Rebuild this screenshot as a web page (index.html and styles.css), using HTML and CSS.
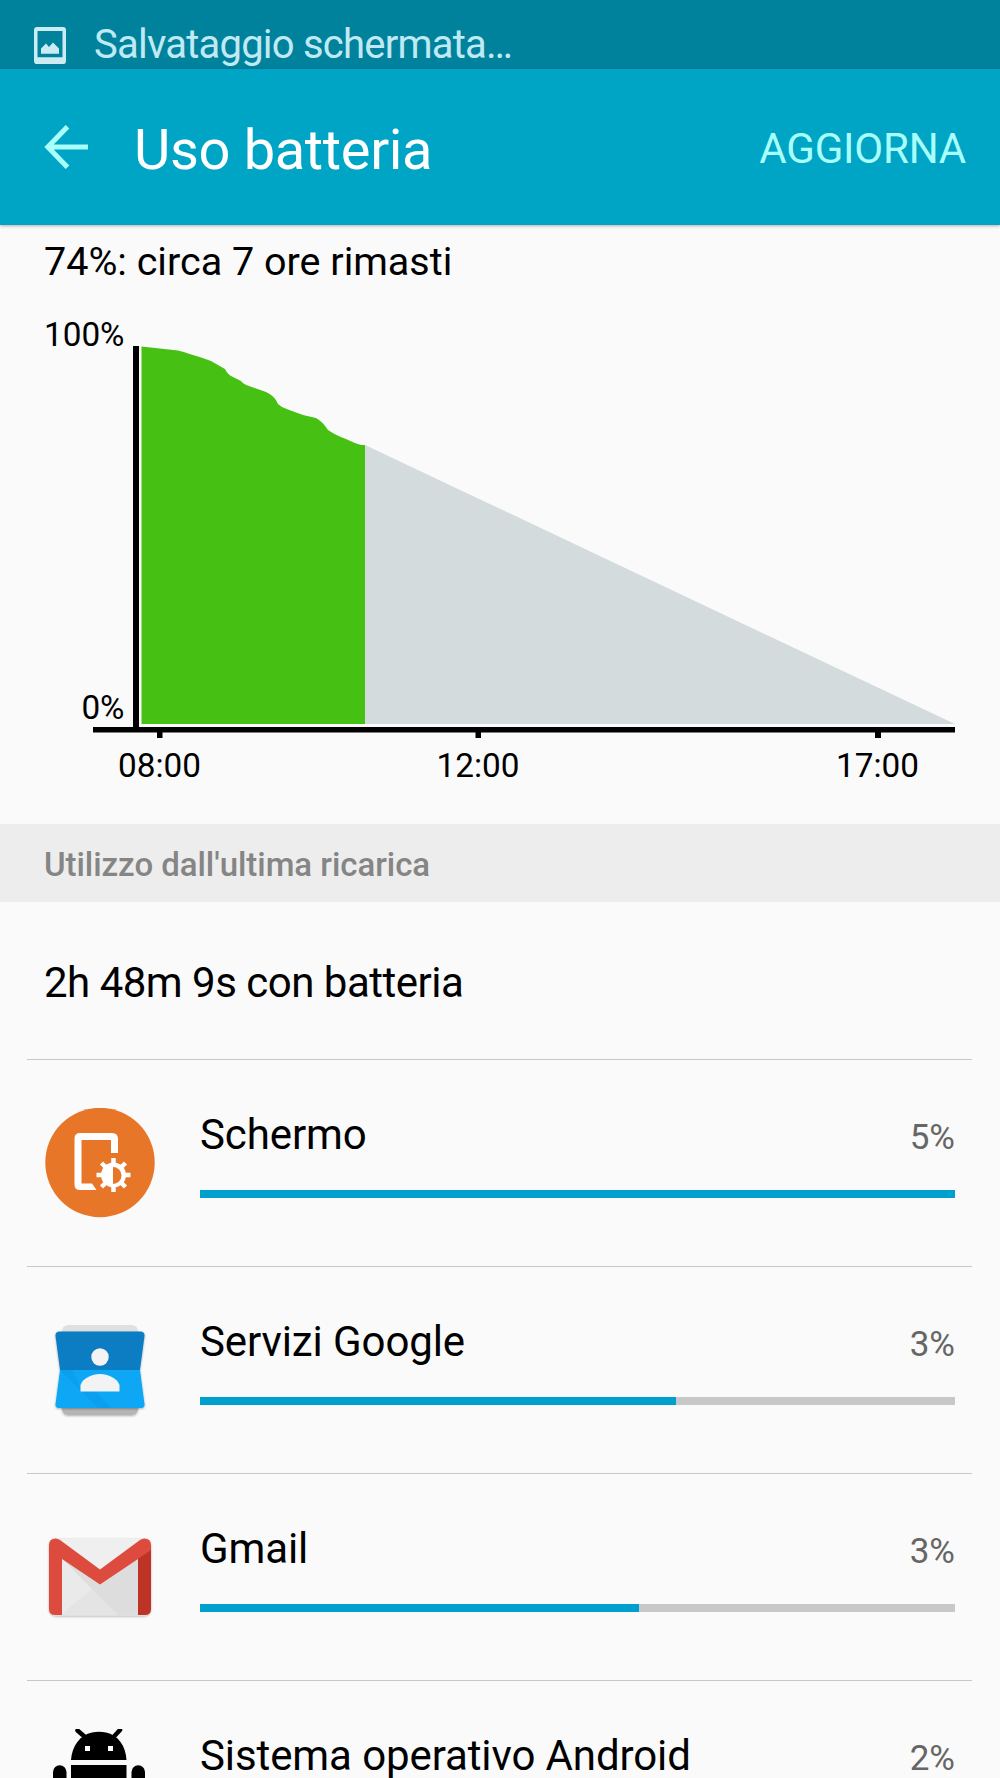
FILE: index.html
```html
<!DOCTYPE html>
<html lang="it">
<head>
<meta charset="utf-8">
<title>Uso batteria</title>
<link rel="stylesheet" href="styles.css">
</head>
<body>
<div class="status-bar">
  <svg class="status-icon" width="32" height="37" viewBox="0 0 32 36" preserveAspectRatio="none">
    <path fill="#ccecf4" fill-rule="evenodd" d="M3 0H29Q32 0 32 3V33Q32 36 29 36H3Q0 36 0 33V3Q0 0 3 0ZM3.500 4V29.500H28.500V4Z"/>
    <path fill="#ccecf4" d="M7 26V21L12 16L15 19.500L19 15L25 21V26Z"/>
  </svg>
  <span class="status-text">Salvataggio schermata…</span>
</div>
<header class="app-bar">
  <svg class="back" width="44" height="44" viewBox="0 0 44 44" fill="none" stroke="#a8fffb" stroke-width="5">
    <path d="M23.500 1.700L3.800 22L23.500 42.300M4 22H44"/>
  </svg>
  <h1 class="title">Uso batteria</h1>
  <span class="action">AGGIORNA</span>
</header>
<main>
  <p class="remaining">74%: circa 7 ore rimasti</p>
  <svg class="chart" width="1000" height="524" viewBox="0 300 1000 524">
    <path fill="#d3dbdd" d="M365 445L955 724H365Z"/>
    <path fill="#46c012" d="M141.500 346.500L178 350.500Q188 353 211 361L225 369Q227 374 233 377L241 381Q243 384 249 386L266 392Q275 396 278 404Q282 408 288 409.500L296 412.500Q302 415 316 418Q322 421 328 430Q335 435 346 439Q354 443 361 445H365V724H141.500Z"/>
    <path fill="#000" d="M133 346H139V727H955V732.500H881V738H875V732.500H481V738H475.500V732.500H162.500V738H157V732.500H93V727H133Z"/>
    <g class="axis-label">
      <text x="124.500" y="345.500" text-anchor="end">100%</text>
      <text x="124.500" y="718.500" text-anchor="end">0%</text>
      <text x="159.500" y="776.500" text-anchor="middle">08:00</text>
      <text x="478" y="776.500" text-anchor="middle">12:00</text>
      <text x="877.500" y="776.500" text-anchor="middle">17:00</text>
    </g>
  </svg>
  <h2 class="section">Utilizzo dall'ultima ricarica</h2>
  <p class="elapsed">2h 48m 9s con batteria</p>
  <ul class="usage">
    <li class="row">
      <svg class="icon" width="110" height="110" viewBox="0 0 110 110">
        <circle cx="55" cy="54.500" r="54.700" fill="#e87629"/>
        <path fill="#fff" d="M35 25H67Q73 25 73 31V45H66V32H36.500V75.500H47L51.500 82H35Q29.500 82 29.500 76.500V30.500Q29.500 25 35 25Z"/>
        <g stroke="#fff" stroke-width="4.500">
          <path d="M68.500 50V84M51.500 67H85.500M56.500 55L80.500 79M80.500 55L56.500 79"/>
        </g>
        <circle cx="68.500" cy="67" r="12.500" fill="#fff"/>
        <path fill="#e87629" d="M68 59A8.500 8.500 0 0 1 68 76Z"/>
      </svg>
      <div class="detail">
        <div class="line"><span class="name">Schermo</span><span class="percent">5%</span></div>
        <div class="track"><div class="fill" style="width:100%"></div></div>
      </div>
    </li>
    <li class="row">
      <svg class="icon" width="110" height="110" viewBox="0 0 110 110">
        <defs>
          <filter id="soft" x="-10%" y="-10%" width="120%" height="125%"><feDropShadow dx="0" dy="1" stdDeviation="1" flood-opacity=".3"/></filter>
        </defs>
        <rect x="17" y="10" width="76" height="25" rx="6" fill="#e0e0e0"/>
        <rect x="17" y="77" width="76" height="23" rx="6" fill="#b5b5b5" filter="url(#soft)"/>
        <g filter="url(#soft)">
          <path fill="#0a7dc3" d="M14 16.500H96Q100 17 99.500 21L95 55H15L10.500 21Q10 17 14 16.500Z"/>
          <path fill="#09a7f5" d="M15 55H95L99.500 89Q100 93 96 93H14Q10 93 10.500 89Z"/>
        </g>
        <path fill="#079ae8" d="M15 55H28L36 76H50L66 93H53Z" opacity=".5"/>
        <circle cx="55" cy="42" r="8.700" fill="#f3f3f3"/>
        <path fill="#f3f3f3" d="M35.500 76.500V70C38 63 47 59 55 59S72 63 74.500 70V76.500Z"/>
      </svg>
      <div class="detail">
        <div class="line"><span class="name">Servizi Google</span><span class="percent">3%</span></div>
        <div class="track"><div class="fill" style="width:63%"></div></div>
      </div>
    </li>
    <li class="row">
      <svg class="icon" width="110" height="110" viewBox="0 0 110 110">
        <rect x="4" y="16.500" width="102" height="77" rx="7" fill="#e4e4e4" filter="url(#soft)"/>
        <path fill="#efefef" d="M10 16.500H100L55 49Z"/>
        <path fill="#eaeaea" d="M17 36L47 67L17 92Z"/>
        <path fill="#d8d8d8" d="M17 36L47 67L73 93H93V32L56 61Z" opacity=".65"/>
        <path fill="#dd4b3f" d="M4 25L17 34V93H10Q4 93 4 87Z"/>
        <path fill="#bd3427" d="M106 25L93 34V93H100Q106 93 106 87Z"/>
        <path fill="#dd4b3f" d="M4 28V23Q4 16.500 10.500 16.500Q13 16.500 15 18L55 47.500L95 18Q97 16.500 99.500 16.500Q106 16.500 106 23V28L93 37L55 62.500L17 37Z"/>
      </svg>
      <div class="detail">
        <div class="line"><span class="name">Gmail</span><span class="percent">3%</span></div>
        <div class="track"><div class="fill" style="width:58.100%"></div></div>
      </div>
    </li>
    <li class="row row-cut">
      <svg class="icon" width="110" height="49" viewBox="1 1 110 49">
        <path d="M27 32C28 18 36 7 48 4.500Q55 3 62 4.500C74 7 82 18 82.500 32Z"/>
        <path d="M33.500 2.500L41 9M76 2L69.500 9" stroke="#000" stroke-width="4.500" stroke-linecap="round"/>
        <path fill="#fff" d="M41 18H46V23H41ZM64 18H69V23H64Z"/>
        <path d="M27 37H82.500V85H27ZM9 80V44A6.500 6.500 0 0 1 22.500 44V80ZM87.500 80V44A6.500 6.500 0 0 1 101 44V80Z"/>
      </svg>
      <div class="detail">
        <div class="line"><span class="name">Sistema operativo Android</span><span class="percent">2%</span></div>
      </div>
    </li>
  </ul>
</main>
</body>
</html>
```
FILE: styles.css
```css
* { box-sizing: border-box; }
body {
  margin: 0;
  width: 1000px;
  height: 1778px;
  overflow: hidden;
  background: #fafafa;
  color: #000;
  font-family: Roboto, "Liberation Sans", sans-serif;
}
h1, h2, p, ul { margin: 0; padding: 0; font-weight: 400; }
svg { display: block; flex: none; }

.status-bar {
  display: flex;
  align-items: flex-start;
  height: 69px;
  padding: 27px 34px 0;
  gap: 28px;
  background: #00829d;
}
.status-text {
  margin-top: -8px;
  font-size: 40px;
  line-height: 52px;
  height: 50px;
  letter-spacing: -.78px;
  color: #c0eaf3;
}

.app-bar {
  display: flex;
  align-items: center;
  height: 156px;
  padding: 0 34px 0 44px;
  background: #00a5c5;
  box-shadow: 0 1px 3px rgba(0, 0, 0, .3);
}
.title {
  padding-top: 5px;
  margin-left: 46px;
  font-size: 56px;
  line-height: 66px;
  letter-spacing: -.35px;
  color: #fff;
}
.action {
  margin-left: auto;
  padding-top: 3px;
  font-size: 42px;
  line-height: 50px;
  letter-spacing: -.2px;
  color: #a8fffb;
}

.remaining { height: 75px; padding: 12px 44px 0; font-size: 39.5px; line-height: 50px; }
.axis-label { font-size: 33.300px; }

.section {
  height: 78px;
  padding: 0 44px;
  background: #ededed;
  color: #858585;
  font-size: 33px;
  font-weight: 500;
  line-height: 81px;
  letter-spacing: -.05px;
}
.elapsed {
  height: 157px;
  padding: 0 44px;
  font-size: 42px;
  line-height: 162px;
  letter-spacing: -.5px;
}

.usage { list-style: none; padding: 0 28px 0 27px; }
.row {
  display: flex;
  align-items: flex-start;
  height: 207px;
  padding: 48px 17px 0 18px;
  gap: 45px;
  border-top: 1px solid #c8c8c8;
}
.row-cut { height: 98px; }
.detail { flex: 1; }
.line { display: flex; align-items: flex-start; justify-content: space-between; height: 82px; }
.name { font-size: 42px; line-height: 54px; letter-spacing: -.1px; }
.row-cut .line { height: 49px; }
.row-cut .name, .row-cut .percent { height: 49px; }
.percent { font-size: 35px; line-height: 60px; color: #666; }
.track { height: 8px; background: #c8c8c8; }
.fill { height: 8px; background: #00a0ce; }
```
